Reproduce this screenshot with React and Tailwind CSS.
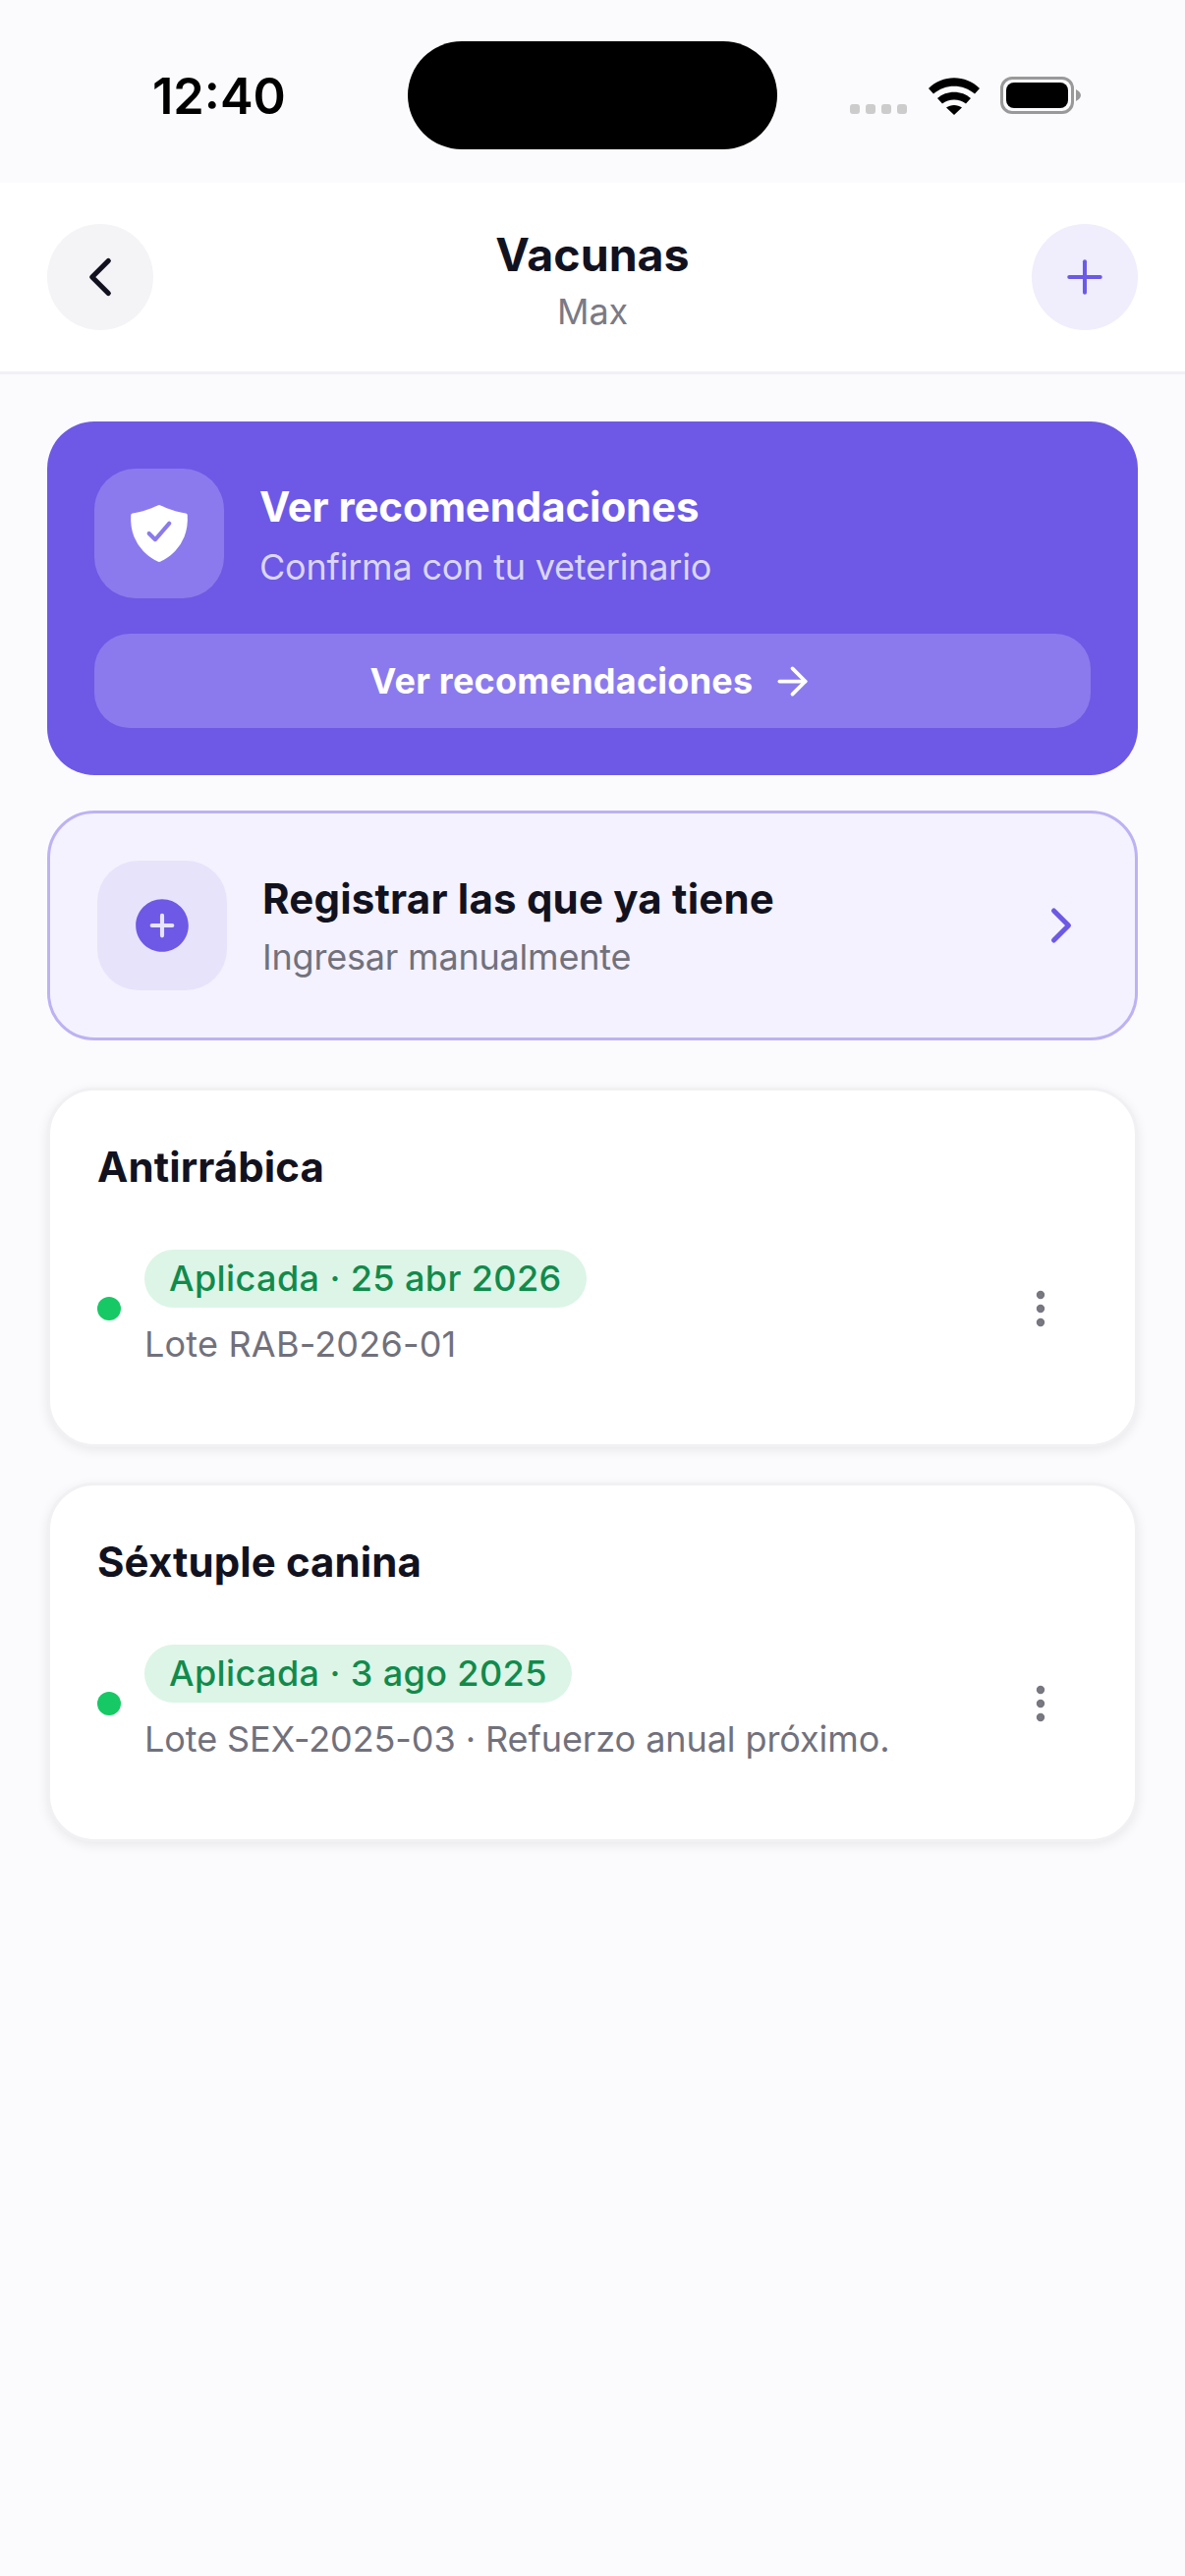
import { ArrowRight, ChevronLeft, ChevronRight, EllipsisVertical, Plus } from 'lucide-react';
import { IoAddCircle, IoShieldCheckmark } from 'react-icons/io5';

function StatusBar() {
  return (
    <div className="h-[186px] flex items-start relative">
      <span className="absolute left-[155px] top-[67px] text-[50.5px] leading-[62px] font-semibold text-black">12:40</span>
      <div className="absolute left-[415px] top-[42px] w-[376px] h-[110px] rounded-[55px] bg-black" />
      <div className="absolute left-[865px] top-[106px] flex gap-[6px]">
        <div className="w-[10px] h-[10px] rounded-[3px] bg-[#cccccc]" />
        <div className="w-[10px] h-[10px] rounded-[3px] bg-[#cccccc]" />
        <div className="w-[10px] h-[10px] rounded-[3px] bg-[#cccccc]" />
        <div className="w-[10px] h-[10px] rounded-[3px] bg-[#cccccc]" />
      </div>
      <svg className="absolute left-[945px] top-[79px]" width="52" height="38" viewBox="0 0 52 38">
        <path d="M0 11 C14 -3.5 38 -3.5 52 11 L47 16.5 C35 6 17 6 5 16.5 Z" fill="#000" />
        <path d="M9 21 C18 12.5 34 12.5 43 21 L38 26.5 C31 21 21 21 14 26.5 Z" fill="#000" />
        <path d="M18 30.5 C22.500 27 29.500 27 34 30.500 L26 38 Z" fill="#000" />
      </svg>
      <div className="absolute left-[1018px] top-[78px] w-[75px] h-[38px] rounded-[12px] border-[3px] border-[#999999] p-[3px]">
        <div className="w-full h-full rounded-[8px] bg-black" />
      </div>
      <svg className="absolute left-[1095px] top-[91px]" width="5" height="12" viewBox="0 0 5 12">
        <path d="M0 0 L3 2 Q5 4 5 6 Q5 8 3 10 L0 12 Z" fill="#999999" />
      </svg>
    </div>
  );
}

function Header() {
  return (
    <div className="h-[195px] bg-white border-b-[3px] border-[#f1f1f5] px-[48px] pt-[42px] flex items-start justify-between">
      <button className="w-[108px] h-[108px] rounded-full bg-[#f4f4f7] flex items-center justify-center">
        <ChevronLeft size={66} strokeWidth={1.9} color="#12121f" />
      </button>
      <div className="flex flex-col items-center pt-[2px]">
        <span className="text-[46.5px] leading-[58px] font-bold text-[#12121f]">Vacunas</span>
        <span className="text-[36px] leading-[44px] mt-[7px] tracking-[-0.2px] text-[#7a7a85]">Max</span>
      </div>
      <button className="w-[108px] h-[108px] rounded-full bg-[#f0edfc] flex items-center justify-center">
        <Plus size={54} strokeWidth={1.8} color="#6c5ae6" />
      </button>
    </div>
  );
}

function VaccineCard({ name, status, note, noteClass }) {
  return (
    <div className="bg-white rounded-[48px] border-[3px] border-[#f1f1f4] shadow-[0_3px_12px_rgba(0,0,0,0.08)] p-[48px] h-[366px]">
      <h3 className="mt-[4px] text-[42px] leading-[52px] font-bold tracking-[0.1px] text-[#12121f]">{name}</h3>
      <div className="mt-[58px] flex items-center gap-[24px]">
        <div className="w-[24px] h-[24px] rounded-full bg-[#16c964] shrink-0" />
        <div className="flex-1 flex flex-col items-start">
          <span className="h-[59px] px-[25px] rounded-full bg-[#dcf5e7] text-[36px] leading-[59px] font-[550] tracking-[0.4px] text-[#118a4c]">{status}</span>
          <span className={`mt-[14px] text-[36px] leading-[46px] text-[#71717c] ${noteClass}`}>{note}</span>
        </div>
        <EllipsisVertical size={48} strokeWidth={2.2} color="#77777f" className="mr-[24px]" />
      </div>
    </div>
  );
}

export default function App() {
  return (
    <div className="w-[1206px] h-[2622px] bg-[#fbfbfe] font-['Inter',sans-serif]">
      <StatusBar />
      <Header />
      <main className="px-[48px] pt-[48px] flex flex-col">
        <section className="h-[360px] rounded-[48px] bg-[#6d59e5] p-[48px]">
          <div className="flex items-center gap-[36px]">
            <div className="w-[132px] h-[132px] rounded-[42px] bg-[#8b7aed] flex items-center justify-center shrink-0">
              <IoShieldCheckmark size={66} color="#ffffff" />
            </div>
            <div className="flex flex-col pt-[3px]">
              <span className="text-[42px] leading-[52px] font-bold tracking-[-0.1px] text-white">Ver recomendaciones</span>
              <span className="text-[36px] leading-[44px] mt-[13px] tracking-[-0.2px] text-[#dbd6f9]">Confirma con tu veterinario</span>
            </div>
          </div>
          <button className="mt-[36px] w-full h-[96px] rounded-[36px] bg-[#8b7aed] flex items-center justify-center gap-[18px] text-[36px] font-bold tracking-[0.25px] text-white">
            Ver recomendaciones
            <ArrowRight size={45} strokeWidth={2} />
          </button>
        </section>

        <section className="mt-[36px] h-[234px] rounded-[48px] border-[3px] border-[#bdb2f3] bg-[#f4f2fe] px-[48px] flex items-center gap-[36px]">
          <div className="w-[132px] h-[132px] rounded-[42px] bg-[#e7e3fb] flex items-center justify-center shrink-0">
            <IoAddCircle size={66} color="#6d59e5" />
          </div>
          <div className="flex-1 flex flex-col">
            <span className="text-[42px] leading-[52px] font-bold tracking-[0.2px] text-[#12121f]">Registrar las que ya tiene</span>
            <span className="text-[36px] leading-[44px] mt-[11px] tracking-[-0.2px] text-[#71717c]">Ingresar manualmente</span>
          </div>
          <ChevronRight size={60} strokeWidth={2} color="#6d59e5" className="mr-[-3px]" />
        </section>

        <div className="mt-[48px] flex flex-col gap-[36px]">
          <VaccineCard name="Antirrábica" status="Aplicada · 25 abr 2026" note="Lote RAB-2026-01" noteClass="tracking-[0.2px]" />
          <VaccineCard name="Séxtuple canina" status="Aplicada · 3 ago 2025" note="Lote SEX-2025-03 · Refuerzo anual próximo." noteClass="tracking-[-0.08px]" />
        </div>
      </main>
    </div>
  );
}
